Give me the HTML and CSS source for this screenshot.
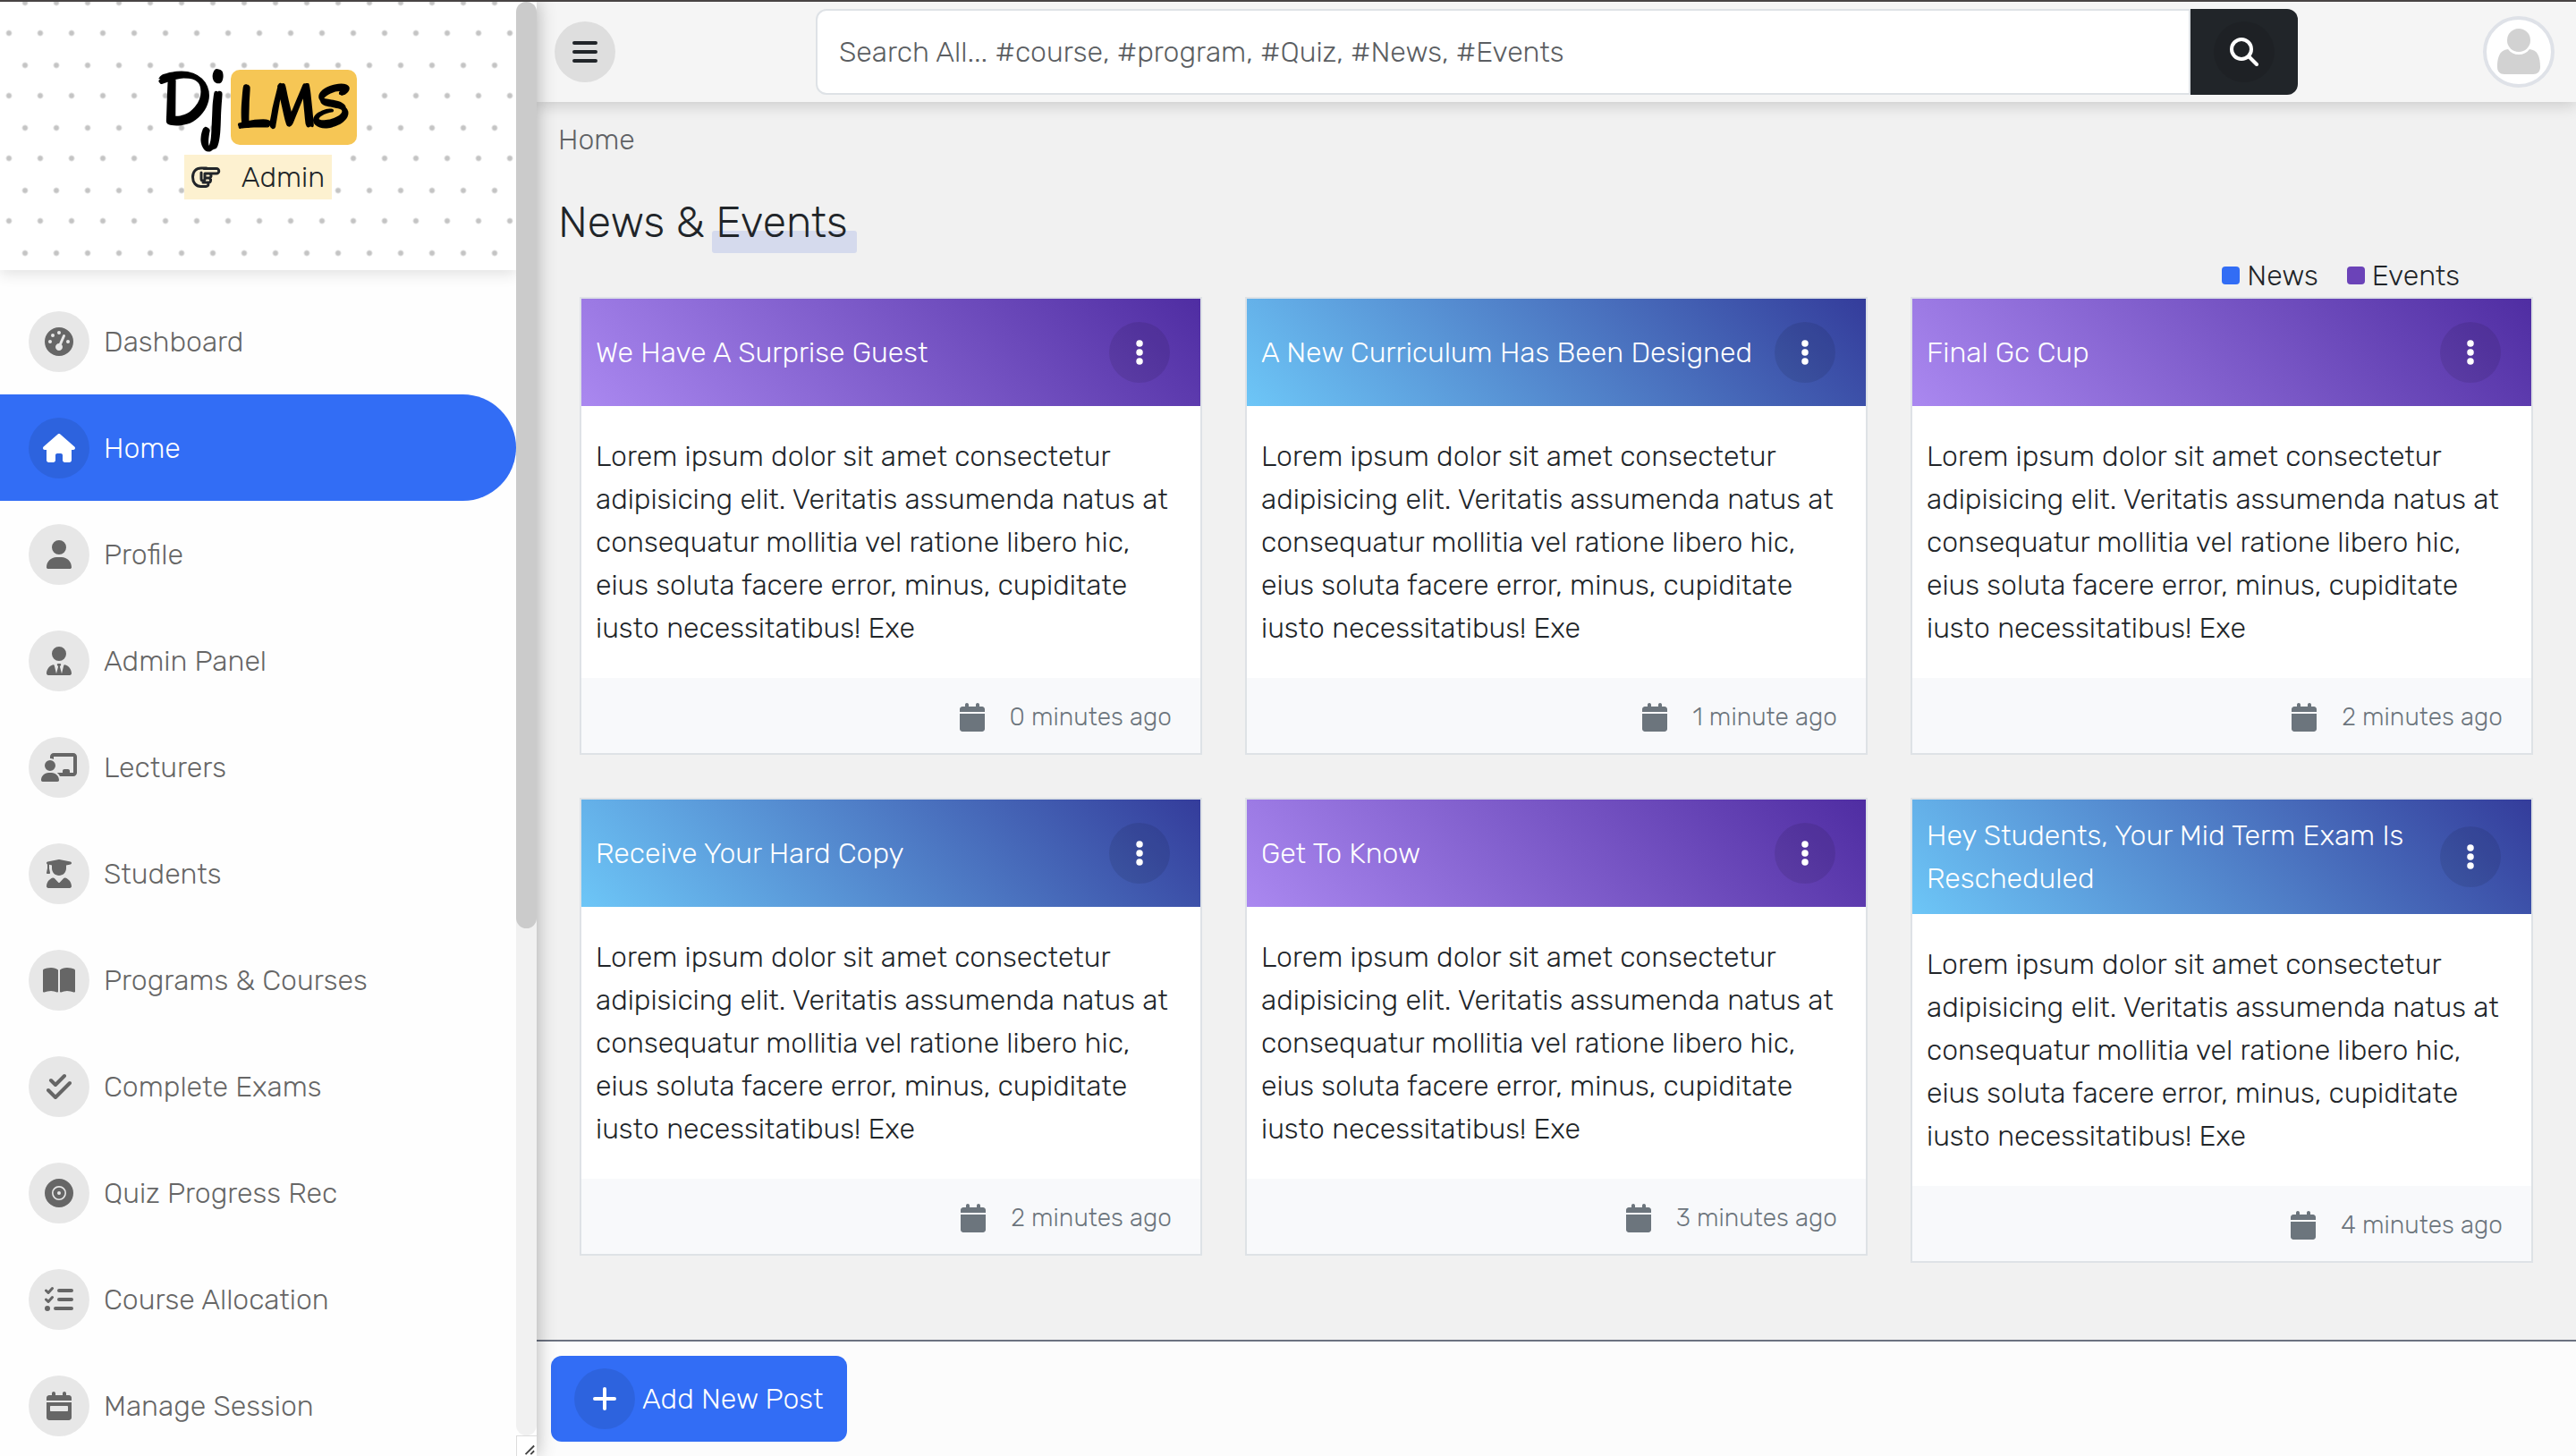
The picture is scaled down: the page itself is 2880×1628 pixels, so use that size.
FILE: index.html
```html
<!DOCTYPE html>
<html lang="en">
<head>
<meta charset="utf-8">
<meta name="viewport" content="width=device-width, initial-scale=1">
<title>Dj LMS</title>
<link rel="stylesheet" href="styles.css">
</head>
<body>
<svg class="sprite" aria-hidden="true">
  <symbol id="dots" viewBox="0 0 128 512"><circle cx="64" cy="96" r="60"/><circle cx="64" cy="256" r="60"/><circle cx="64" cy="416" r="60"/></symbol>
  <symbol id="calendar" viewBox="0 0 448 512"><path d="M96 32V64H48C21.500 64 0 85.500 0 112v48H448V112c0-26.500-21.500-48-48-48H352V32c0-17.700-14.300-32-32-32s-32 14.300-32 32V64H160V32c0-17.700-14.300-32-32-32S96 14.300 96 32zM448 192H0V464c0 26.500 21.500 48 48 48H400c26.500 0 48-21.500 48-48V192z"/></symbol>
</svg>
<div class="app">
  <aside class="sidebar">
    <div class="sidebar-content">
      <div class="brand">
        <a class="logo" href="#"><span class="logo-dj">Dj</span><span class="logo-lms">LMS</span></a>
        <div class="role">
          <svg class="hand" viewBox="0 0 32 24" aria-hidden="true"><path d="M17 2H11C5 2 1.500 6 1.500 12S5 22.500 10.500 22.500H16.500a2.500 2.500 0 0 0 1.500-4.500M14 2.500H28a2.500 2.500 0 0 1 0 5.500H15.500M11 7v7a2 2 0 0 0 4 0V8M21 8.500a2.500 2.500 0 0 1-1 4.500H16M19.500 13a2.500 2.500 0 0 1-1 5H13"/></svg>
          <span>Admin</span>
        </div>
      </div>
      <nav aria-label="Main">
        <ul class="menu">
          <li><a href="#"><span class="disc"><svg viewBox="0 0 512 512"><path d="M0 256a256 256 0 1 1 512 0A256 256 0 1 1 0 256zM288 96a32 32 0 1 0 -64 0 32 32 0 1 0 64 0zM256 416c35.300 0 64-28.700 64-64c0-17.400-6.900-33.100-18.100-44.600L366 161.700c5.300-12.100-.2-26.300-12.300-31.600s-26.300 .2-31.600 12.300L257.900 288c-.6 0-1.300 0-1.900 0c-35.300 0-64 28.700-64 64s28.700 64 64 64zM176 144a32 32 0 1 0 -64 0 32 32 0 1 0 64 0zM96 288a32 32 0 1 0 0-64 32 32 0 1 0 0 64zm352-32a32 32 0 1 0 -64 0 32 32 0 1 0 64 0z"/></svg></span>Dashboard</a></li>
          <li><a class="active" href="#" aria-current="page"><span class="disc"><svg viewBox="0 0 576 512"><path d="M575.800 255.500c0 18-15 32.100-32 32.100h-32l.7 160.200c0 2.700-.2 5.400-.5 8.100V472c0 22.100-17.900 40-40 40H456c-1.100 0-2.200 0-3.300-.1c-1.400 .1-2.800 .1-4.200 .1H416 392c-22.100 0-40-17.900-40-40V448 384c0-17.700-14.300-32-32-32H256c-17.700 0-32 14.300-32 32v64 24c0 22.100-17.900 40-40 40H160 128.100c-1.500 0-3-.1-4.500-.2c-1.200 .1-2.400 .2-3.600 .2H104c-22.100 0-40-17.900-40-40V360c0-.9 0-1.900 .1-2.800V287.600H32c-18 0-32-14-32-32.100c0-9 3-17 10-24L266.400 8c7-7 15-8 22-8s15 2 21 7L564.800 231.500c8 7 12 15 11 24z"/></svg></span>Home</a></li>
          <li><a href="#"><span class="disc"><svg viewBox="0 0 448 512"><path d="M224 256A128 128 0 1 0 224 0a128 128 0 1 0 0 256zm-45.700 48C79.800 304 0 383.800 0 482.300C0 498.700 13.300 512 29.700 512H418.300c16.400 0 29.700-13.300 29.700-29.700C448 383.800 368.200 304 269.700 304H178.300z"/></svg></span>Profile</a></li>
          <li><a href="#"><span class="disc"><svg viewBox="0 0 448 512"><path d="M96 128a128 128 0 1 0 256 0A128 128 0 1 0 96 128zm94.500 200.200l18.600 31L175.800 483.100l-36-146.900c-2-8.100-9.800-13.400-17.900-11.300C51.900 342.400 0 405.800 0 481.300c0 17 13.800 30.700 30.700 30.700H162.500H168 280h5.500H417.300c17 0 30.700-13.800 30.700-30.700c0-75.500-51.900-138.900-121.900-156.400c-8.100-2-15.900 3.300-17.900 11.300l-36 146.900L238.900 359.200l18.600-31c6.400-10.700-1.300-24.200-13.700-24.200H224 204.300c-12.400 0-20.100 13.600-13.700 24.200z"/></svg></span>Admin Panel</a></li>
          <li><a href="#"><span class="disc"><svg viewBox="0 0 640 512"><path d="M160 64c0-35.300 28.700-64 64-64H576c35.300 0 64 28.700 64 64V352c0 35.300-28.700 64-64 64H336.800c-11.800-25.500-29.900-47.500-52.400-64H384V320c0-17.700 14.300-32 32-32h64c17.700 0 32 14.300 32 32v32h64V64L224 64v49.100C205.200 102.200 183.300 96 160 96V64zm0 64a96 96 0 1 1 0 192 96 96 0 1 1 0-192zM133.300 352h53.300C260.300 352 320 411.700 320 485.300c0 14.700-11.900 26.700-26.700 26.700H26.700C11.900 512 0 500.100 0 485.300C0 411.700 59.700 352 133.300 352z"/></svg></span>Lecturers</a></li>
          <li><a href="#"><span class="disc"><svg viewBox="0 0 448 512"><path d="M219.300 .5c3.100-.6 6.300-.6 9.400 0l200 40C439.900 42.700 448 52.600 448 64s-8.100 21.300-19.300 23.500L352 102.900V160c0 70.700-57.300 128-128 128s-128-57.300-128-128V102.900L48 93.300v65.100l15.700 78.400c.9 4.700-.3 9.600-3.300 13.300s-7.600 5.900-12.400 5.900H16c-4.800 0-9.300-2.100-12.400-5.900s-4.300-8.600-3.300-13.300L16 158.400V86.600C6.500 83.300 0 74.300 0 64C0 52.600 8.100 42.700 19.300 40.500l200-40zM111.900 327.700c10.500-3.400 21.800 .4 29.400 8.500l71 75.500c6.300 6.700 17 6.700 23.300 0l71-75.500c7.600-8.100 18.900-11.900 29.400-8.500C401 348.600 448 409.400 448 481.300c0 17-13.800 30.700-30.700 30.700H30.700C13.800 512 0 498.200 0 481.300c0-71.900 47-132.700 111.900-153.600z"/></svg></span>Students</a></li>
          <li><a href="#"><span class="disc"><svg viewBox="0 0 576 512"><path d="M249.600 471.500c10.800 3.800 22.400-4.100 22.400-15.500V78.600c0-4.200-1.600-8.400-5-11C247.400 52 202.400 32 144 32C93.500 32 46.300 45.300 18.100 56.100C6.800 60.500 0 71.700 0 83.800V454.100c0 11.900 12.800 20.200 24.100 16.500C55.600 460.100 105.500 448 144 448c33.900 0 79 14 105.600 23.500zm76.800 0C353 462 398.100 448 432 448c38.500 0 88.400 12.100 119.900 22.600c11.300 3.800 24.100-4.600 24.100-16.500V83.800c0-12.100-6.800-23.300-18.100-27.600C529.700 45.300 482.500 32 432 32c-58.400 0-103.400 20-123 35.600c-3.300 2.600-5 6.800-5 11V456c0 11.400 11.700 19.300 22.400 15.500z"/></svg></span>Programs &amp; Courses</a></li>
          <li><a href="#"><span class="disc"><svg class="line" viewBox="0 0 448 512"><path d="M80 144l80 80L320 64M32 320l128 128L416 192"/></svg></span>Complete Exams</a></li>
          <li><a href="#"><span class="disc"><svg viewBox="0 0 512 512"><path fill-rule="evenodd" d="M256 0a256 256 0 1 1 0 512 256 256 0 1 1 0-512zm0 128a128 128 0 1 0 0 256 128 128 0 1 0 0-256zm0 26a102 102 0 1 1 0 204 102 102 0 1 1 0-204zm0 70a32 32 0 1 0 0 64 32 32 0 1 0 0-64z"/></svg></span>Quiz Progress Rec</a></li>
          <li><a href="#"><span class="disc"><svg class="line" viewBox="0 0 512 512"><path d="M256 96H480M256 256H480M192 416H480"/><path stroke-width="48" d="M24 96l40 40 72-80M24 256l40 40 72-80"/><circle class="dot" cx="48" cy="416" r="48"/></svg></span>Course Allocation</a></li>
          <li><a href="#"><span class="disc"><svg viewBox="0 0 448 512"><path d="M128 0c17.700 0 32 14.300 32 32V64H288V32c0-17.700 14.300-32 32-32s32 14.300 32 32V64h48c26.500 0 48 21.500 48 48v48H0V112C0 85.500 21.500 64 48 64H96V32c0-17.700 14.300-32 32-32zM0 192H448V464c0 26.500-21.500 48-48 48H48c-26.500 0-48-21.500-48-48V192zm80 64c-8.800 0-16 7.200-16 16v64c0 8.800 7.200 16 16 16H368c8.800 0 16-7.200 16-16V272c0-8.800-7.200-16-16-16H80z"/></svg></span>Manage Session</a></li>
        </ul>
      </nav>
    </div>
    <div class="scroll" aria-hidden="true">
      <div class="track"><div class="thumb"></div></div>
      <div class="corner"><svg viewBox="0 0 23 23"><path d="M10 21L20 11M16 21L20 17"/></svg></div>
    </div>
  </aside>
  <div class="page">
    <header class="topbar">
      <button class="disc toggle" type="button" aria-label="Toggle menu"><svg class="line" viewBox="0 0 448 512"><path d="M32 96H416M32 256H416M32 416H416"/></svg></button>
      <form class="search">
        <input type="search" aria-label="Search" placeholder="Search All... #course, #program, #Quiz, #News, #Events">
        <button type="button" aria-label="Submit search"><span class="disc"><svg class="line" viewBox="0 0 512 512"><circle cx="208" cy="208" r="176"/><path d="M336 336L480 480"/></svg></span></button>
      </form>
      <button class="avatar" type="button" aria-label="Account"><svg viewBox="0 0 72 72"><circle cx="36" cy="23" r="13"/><path d="M24 33c3 4 7 6 12 6s9-2 12-6c9 1 12 8 12 20 0 5-3 8-8 8H20c-5 0-8-3-8-8 0-12 3-19 12-20z"/></svg></button>
    </header>
    <main>
      <nav class="crumbs" aria-label="Breadcrumb"><a href="#">Home</a></nav>
      <h1>News &amp; <span class="mark">Events</span></h1>
      <div class="legend"><span class="key news">News</span><span class="key events">Events</span></div>
      <div class="cards">
        <article class="card events">
          <header><h2>We Have A Surprise Guest</h2><button class="disc" type="button" aria-label="Options"><svg><use href="#dots"/></svg></button></header>
          <p>Lorem ipsum dolor sit amet consectetur adipisicing elit. Veritatis assumenda natus at consequatur mollitia vel ratione libero hic, eius soluta facere error, minus, cupiditate iusto necessitatibus! Exe</p>
          <footer><svg><use href="#calendar"/></svg>0 minutes ago</footer>
        </article>
        <article class="card news">
          <header><h2>A New Curriculum Has Been Designed</h2><button class="disc" type="button" aria-label="Options"><svg><use href="#dots"/></svg></button></header>
          <p>Lorem ipsum dolor sit amet consectetur adipisicing elit. Veritatis assumenda natus at consequatur mollitia vel ratione libero hic, eius soluta facere error, minus, cupiditate iusto necessitatibus! Exe</p>
          <footer><svg><use href="#calendar"/></svg>1 minute ago</footer>
        </article>
        <article class="card events">
          <header><h2>Final Gc Cup</h2><button class="disc" type="button" aria-label="Options"><svg><use href="#dots"/></svg></button></header>
          <p>Lorem ipsum dolor sit amet consectetur adipisicing elit. Veritatis assumenda natus at consequatur mollitia vel ratione libero hic, eius soluta facere error, minus, cupiditate iusto necessitatibus! Exe</p>
          <footer><svg><use href="#calendar"/></svg>2 minutes ago</footer>
        </article>
        <article class="card news">
          <header><h2>Receive Your Hard Copy</h2><button class="disc" type="button" aria-label="Options"><svg><use href="#dots"/></svg></button></header>
          <p>Lorem ipsum dolor sit amet consectetur adipisicing elit. Veritatis assumenda natus at consequatur mollitia vel ratione libero hic, eius soluta facere error, minus, cupiditate iusto necessitatibus! Exe</p>
          <footer><svg><use href="#calendar"/></svg>2 minutes ago</footer>
        </article>
        <article class="card events">
          <header><h2>Get To Know</h2><button class="disc" type="button" aria-label="Options"><svg><use href="#dots"/></svg></button></header>
          <p>Lorem ipsum dolor sit amet consectetur adipisicing elit. Veritatis assumenda natus at consequatur mollitia vel ratione libero hic, eius soluta facere error, minus, cupiditate iusto necessitatibus! Exe</p>
          <footer><svg><use href="#calendar"/></svg>3 minutes ago</footer>
        </article>
        <article class="card news">
          <header><h2>Hey Students, Your Mid Term Exam Is Rescheduled</h2><button class="disc" type="button" aria-label="Options"><svg><use href="#dots"/></svg></button></header>
          <p>Lorem ipsum dolor sit amet consectetur adipisicing elit. Veritatis assumenda natus at consequatur mollitia vel ratione libero hic, eius soluta facere error, minus, cupiditate iusto necessitatibus! Exe</p>
          <footer><svg><use href="#calendar"/></svg>4 minutes ago</footer>
        </article>
      </div>
    </main>
    <div class="actions">
      <button class="add" type="button"><span class="disc"><svg class="line" viewBox="0 0 448 512"><path d="M224 80V432M48 256H400"/></svg></span>Add New Post</button>
    </div>
  </div>
</div>
</body>
</html>
```
FILE: styles.css
```css
*, *::before, *::after { box-sizing: border-box; }

body {
  margin: 0;
  border-top: 2px solid #484444;
  background: #f1f1f1;
  color: #212529;
  font: 300 32px/48px Rubik, Inter, "Liberation Sans", sans-serif;
}

button, input { font: inherit; color: inherit; border: 0; margin: 0; padding: 0; }
a { color: inherit; text-decoration: none; }
h1, h2, p, ul { margin: 0; padding: 0; font-weight: inherit; }
svg { fill: currentColor; flex: none; }
.sprite { display: none; }

.app { display: flex; height: calc(100vh - 2px); }

/* Sidebar */
.sidebar {
  display: flex;
  flex: none;
  width: 600px;
  overflow: hidden;
  background: #fefefe;
  position: relative;
  z-index: 2;
  box-shadow: 0 0 20px rgba(0, 0, 0, 0.3);
}
.sidebar-content { flex: 1; overflow: hidden; }

.brand {
  display: flex;
  flex-direction: column;
  align-items: center;
  height: 300px;
  padding-top: 69px;
  background-color: #fff;
  background-image:
    radial-gradient(circle at 10px 35px, #c4c4c4 2px, transparent 4px),
    radial-gradient(circle at 28px 1px, #c4c4c4 2px, transparent 4px),
    radial-gradient(circle at 28px 71px, #c4c4c4 2px, transparent 4px);
  background-size: 35px 70px;
  box-shadow: 0 4px 16px rgba(0, 0, 0, 0.12);
}
.logo {
  display: flex;
  align-items: baseline;
  gap: 8px;
  height: 84px;
  color: #000;
  font: 400 66px/84px Oregano, "Open Sans Condensed", Lato, sans-serif;
  -webkit-text-stroke: 3px #000;
}
.logo-dj { font-size: 88px; }
.logo-lms { padding: 0 8px; border-radius: 10px; background: #f6c655; }
.role {
  display: flex;
  align-items: center;
  gap: 24px;
  margin-top: 18px;
  padding: 1px 8px;
  background: #fdf1d0;
}
.hand {
  width: 32px;
  height: 24px;
  overflow: visible;
  fill: none;
  stroke: currentColor;
  stroke-width: 3;
  stroke-linecap: round;
  stroke-linejoin: round;
}

.menu { list-style: none; padding-top: 20px; }
.menu a {
  display: flex;
  align-items: center;
  gap: 16px;
  height: 119px;
  padding: 0 32px;
  color: #666;
}
.menu a.active { border-radius: 0 60px 60px 0; background: #326df5; color: #fff; }

.disc {
  display: flex;
  flex: none;
  align-items: center;
  justify-content: center;
  width: 68px;
  height: 68px;
  border-radius: 50%;
  background: rgba(0, 0, 0, 0.09);
}
.disc svg { height: 32px; max-width: 40px; }
.line { fill: none; stroke: currentColor; stroke-width: 64; stroke-linecap: round; stroke-linejoin: round; }
.dot { fill: currentColor; stroke: none; }

.scroll { display: flex; flex-direction: column; width: 23px; }
.track { flex: 1; border-radius: 12px; background: #f1f1f1; }
.thumb { height: 64.6%; border-radius: 12px; background: #cbcbcb; }
.corner { height: 23px; border: 1px solid #dcdcdc; border-width: 1px 0 0 1px; background: #fff; }
.corner svg { display: block; width: 22px; height: 22px; fill: none; stroke: #444; stroke-width: 2; }

/* Page */
.page { display: flex; flex: 1; flex-direction: column; min-width: 0; }

.topbar {
  display: flex;
  flex: none;
  align-items: center;
  justify-content: space-between;
  padding: 8px 24px 8px 20px;
  background: #f5f5f5;
  box-shadow: 0 4px 16px rgba(0, 0, 0, 0.16);
}
.toggle { background: #dedede; }
.search { display: flex; flex: 1; margin: 0 207px 0 224px; }
.search input {
  flex: 1;
  min-width: 0;
  height: 96px;
  padding: 0 24px;
  border: 2px solid #dee2e6;
  border-radius: 12px 0 0 12px;
  background: #fff;
}
.search input::placeholder { color: #5b5e62; opacity: 1; }
.search button {
  display: flex;
  align-items: center;
  padding: 0 26px;
  border-radius: 0 12px 12px 0;
  background: #212529;
  color: #fff;
}
.avatar {
  width: 80px;
  height: 80px;
  overflow: hidden;
  border: 4px solid #dfe2e8;
  border-radius: 50%;
  background: #fff;
  color: #d2d2d2;
}
.avatar svg { display: block; width: 72px; height: 72px; }

main { flex: 1; min-height: 0; overflow: hidden; padding: 18px 24px 0; }
.crumbs { color: #5f6265; }
h1 { margin-top: 40px; font-size: 48px; line-height: 58px; }
.mark { position: relative; z-index: 0; }
.mark::after {
  content: "";
  position: absolute;
  z-index: -1;
  inset: 38px -10px -6px -4px;
  border-radius: 3px;
  background: #d5daed;
}
.legend { display: flex; justify-content: flex-end; gap: 32px; margin-top: 6px; padding-right: 106px; }
.key { display: flex; align-items: center; gap: 8px; }
.key::before { content: ""; width: 20px; height: 20px; border-radius: 4px; }
.key.news::before { background: #326df5; }
.key.events::before { background: #6b43b8; }

.cards {
  display: grid;
  grid-template-columns: repeat(3, minmax(0, 1fr));
  align-items: start;
  gap: 48px;
  padding: 0 24px;
}
.card { border: 2px solid #dee2e6; background: #fff; }
.card header {
  display: flex;
  align-items: center;
  gap: 24px;
  min-height: 120px;
  padding: 16px 34px 16px 16px;
  color: #fff;
}
.card.events header { background: linear-gradient(45deg, #aa88f0, #4f2da2); }
.card.news header { background: linear-gradient(45deg, #6dc6f7, #343c9b); }
.card h2 { flex: 1; font-size: 32px; line-height: 48px; }
.card p { padding: 32px 16px; }
.card footer {
  display: flex;
  align-items: center;
  justify-content: flex-end;
  gap: 28px;
  padding: 20px 32px 16px;
  background: #f8f9fb;
  color: #6c757d;
  font-size: 28px;
}
.card footer svg { width: 28px; height: 32px; }
.card button svg { width: 8px; }

.actions {
  display: flex;
  flex: none;
  padding: 16px;
  border-top: 2px solid #6b7280;
  background: #fcfcfc;
}
.add {
  display: flex;
  align-items: center;
  gap: 8px;
  height: 96px;
  padding: 0 26px;
  border-radius: 12px;
  background: #326df5;
  color: #fff;
}
```
